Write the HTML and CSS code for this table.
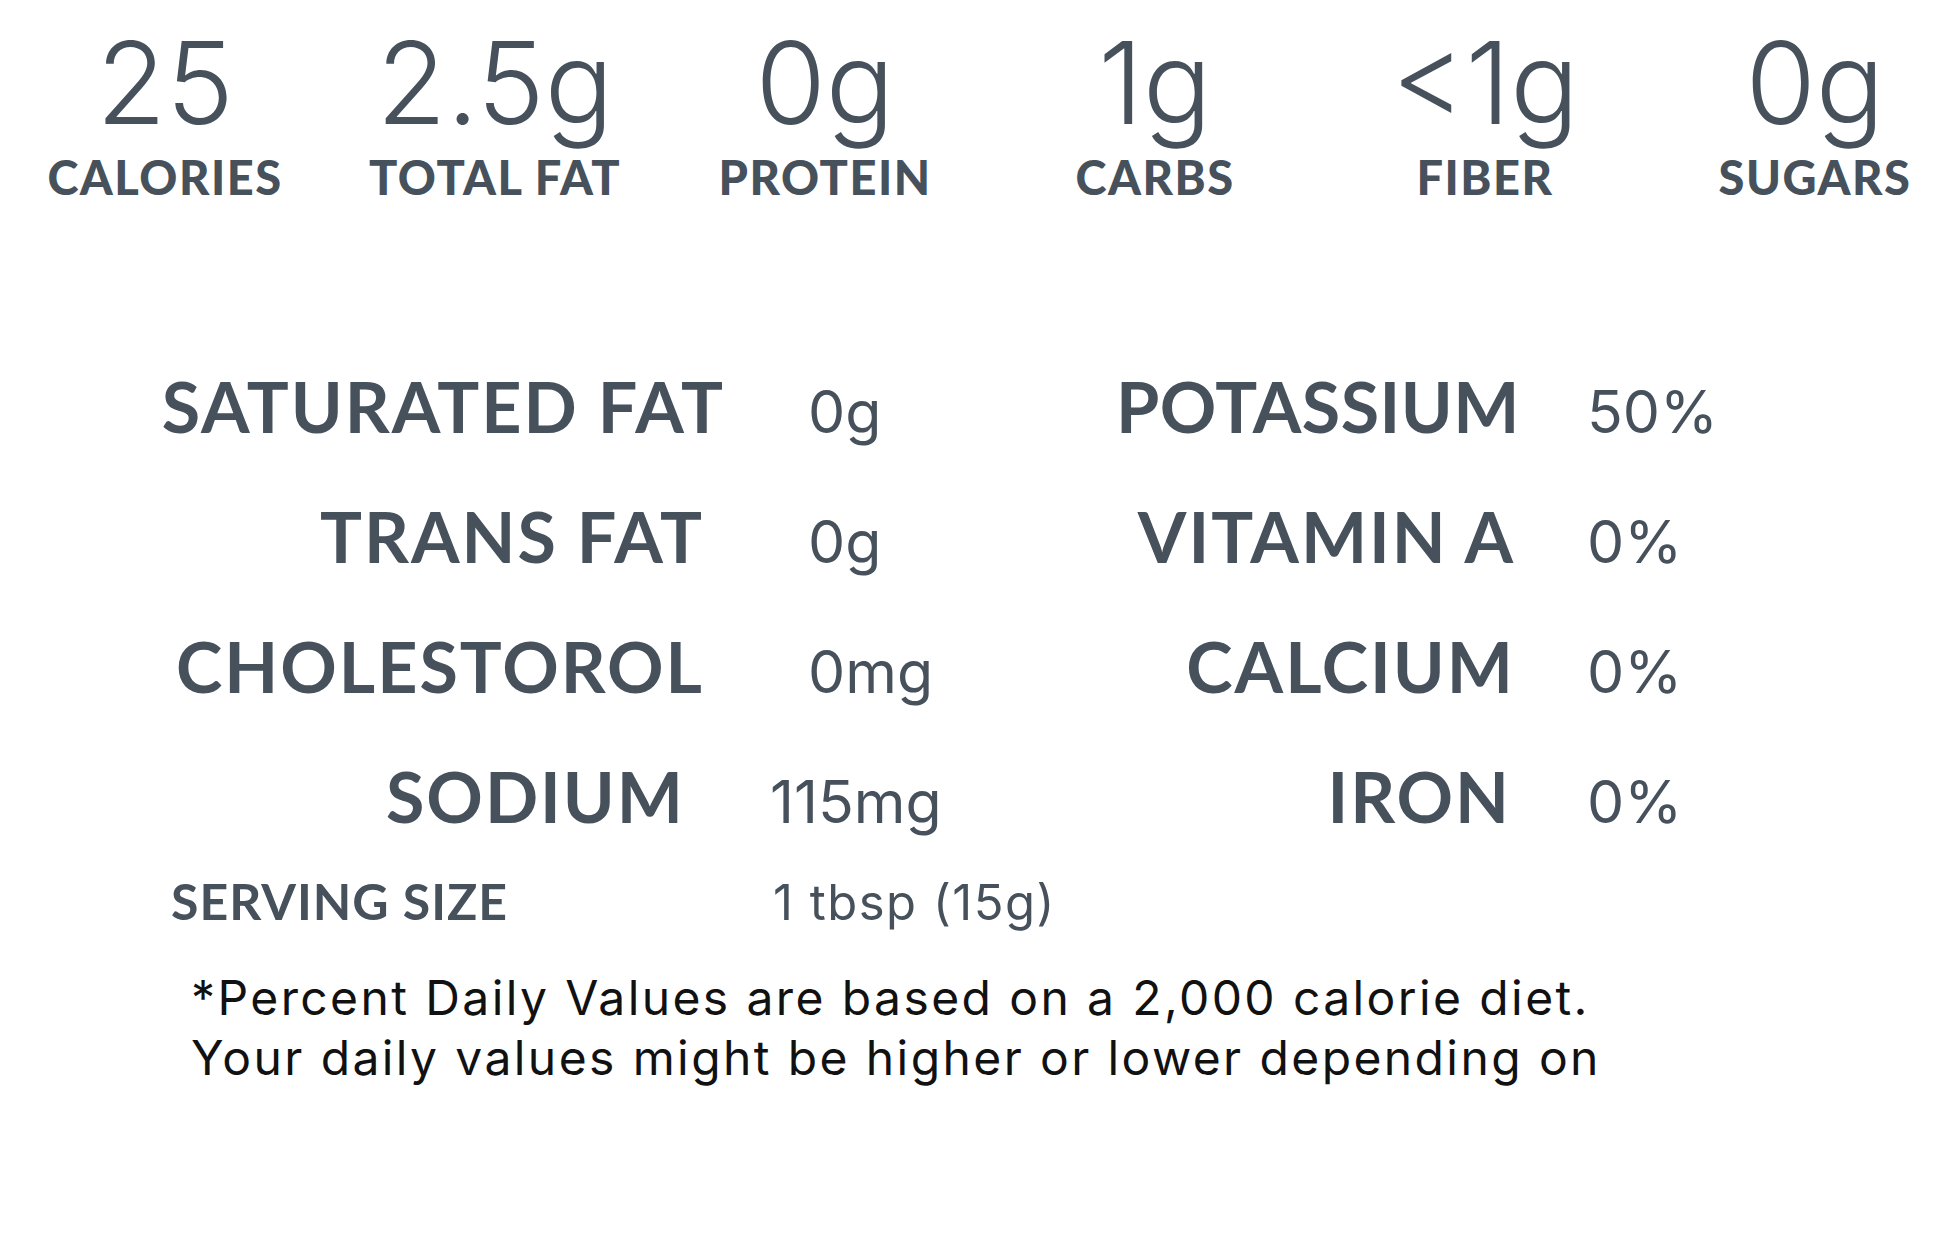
FILE: index.html
```html
<!DOCTYPE html>
<html lang="en">
<head>
<meta charset="utf-8">
<title>Nutrition Facts</title>
<link rel="stylesheet" href="styles.css">
</head>
<body>
<main class="panel">
  <section class="macros">
    <div class="macro"><span class="macro-num">25</span><span class="macro-label">CALORIES</span></div>
    <div class="macro"><span class="macro-num">2.5g</span><span class="macro-label">TOTAL FAT</span></div>
    <div class="macro"><span class="macro-num">0g</span><span class="macro-label">PROTEIN</span></div>
    <div class="macro"><span class="macro-num">1g</span><span class="macro-label">CARBS</span></div>
    <div class="macro"><span class="macro-num">&lt;1g</span><span class="macro-label">FIBER</span></div>
    <div class="macro"><span class="macro-num">0g</span><span class="macro-label">SUGARS</span></div>
  </section>

  <section class="details">
    <span class="d-label">SATURATED FAT</span><span class="d-value">0g</span>
    <span class="d-label d-right tight">POTASSIUM</span><span class="d-value">50%</span>

    <span class="d-label shift-a">TRANS FAT</span><span class="d-value">0g</span>
    <span class="d-label d-right shift-r">VITAMIN A</span><span class="d-value">0%</span>

    <span class="d-label shift-a">CHOLESTOROL</span><span class="d-value">0mg</span>
    <span class="d-label d-right shift-r">CALCIUM</span><span class="d-value">0%</span>

    <span class="d-label shift-b">SODIUM</span><span class="d-value pull-b">115mg</span>
    <span class="d-label d-right shift-s">IRON</span><span class="d-value">0%</span>
  </section>

  <section class="serving">
    <span class="serving-label">SERVING SIZE</span>
    <span class="serving-value">1 tbsp (15g)</span>
  </section>

  <p class="footnote">*Percent Daily Values are based on a 2,000 calorie diet.<br>Your daily values might be higher or lower depending on</p>
</main>
</body>
</html>
```

FILE: styles.css
```css
html, body {
  margin: 0;
  padding: 0;
  background: #ffffff;
  overflow: hidden;
}

body {
  font-family: "Lato", "Liberation Sans", sans-serif;
  color: #46515c;
}

.panel {
  width: 1980px;
}

/* Top macro row */
.macros {
  display: grid;
  grid-template-columns: repeat(6, 330px);
  padding-top: 26px;
}

.macro {
  display: flex;
  flex-direction: column;
  align-items: center;
}

.macro-num {
  font-family: "Inter", "Lato", sans-serif;
  font-size: 114px;
  font-weight: 300;
  line-height: 114px;
  letter-spacing: 0;
}

.macro-label {
  margin-top: 14px;
  font-size: 47px;
  line-height: 47px;
  font-weight: 900;
  letter-spacing: 1.5px;
}

/* Detail grid */
.details {
  display: grid;
  grid-template-columns: 808px 250px 529px auto;
  grid-auto-rows: 130px;
  align-items: baseline;
  margin-top: 140px;
}

.d-label {
  font-size: 70px;
  line-height: 130px;
  font-weight: 700;
  letter-spacing: 2px;
  text-align: right;
  padding-right: 83px;
  white-space: nowrap;
}

.d-right {
  padding-right: 67px;
}

.tight { letter-spacing: 0.5px; }

.shift-a { padding-right: 104px; }
.shift-b { padding-right: 123px; }
.shift-r { padding-right: 72px; }
.shift-s { padding-right: 76px; }

.d-value {
  font-family: "Inter", "Lato", sans-serif;
  font-size: 59px;
  line-height: 130px;
  font-weight: 400;
  letter-spacing: 0;
  white-space: nowrap;
}

.pull-b { margin-left: -38px; }

/* Serving size */
.serving {
  display: grid;
  grid-template-columns: 602px auto;
  align-items: baseline;
  padding-left: 171px;
  margin-top: 5px;
}

.serving-label {
  font-size: 50px;
  line-height: 70px;
  font-weight: 700;
  letter-spacing: 1px;
}

.serving-value {
  font-family: "Inter", "Lato", sans-serif;
  font-size: 49px;
  line-height: 70px;
  font-weight: 400;
  letter-spacing: 1.5px;
}

/* Footnote */
.footnote {
  margin: 30px 0 0 191px;
  font-family: "Inter", "Lato", sans-serif;
  font-size: 48px;
  line-height: 60px;
  font-weight: 400;
  color: #111111;
  letter-spacing: 2.4px;
}
```
